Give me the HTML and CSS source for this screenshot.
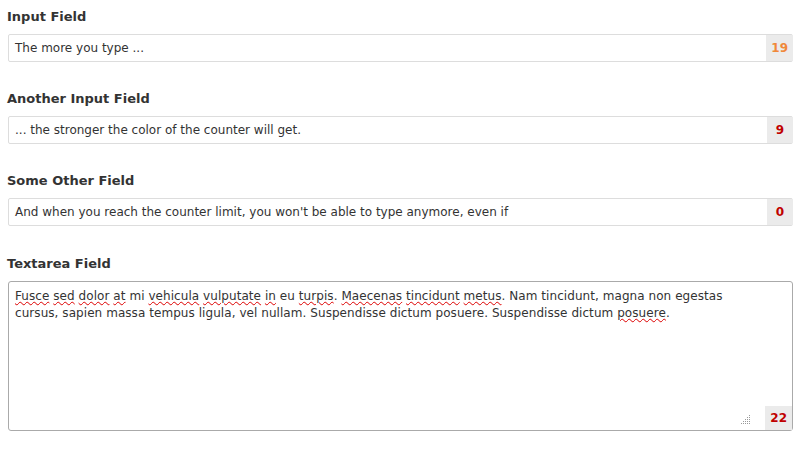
FILE: index.html
```html
<!DOCTYPE html>
<html>
<head>
<meta charset="utf-8">
<link rel="stylesheet" href="styles.css">
</head>
<body>
<div class="field">
  <label class="label">Input Field</label>
  <div class="wrap">
    <div class="input">The more you type ...</div>
    <span class="counter warn">19</span>
  </div>
</div>
<div class="field">
  <label class="label">Another Input Field</label>
  <div class="wrap">
    <div class="input">... the stronger the color of the counter will get.</div>
    <span class="counter danger">9</span>
  </div>
</div>
<div class="field">
  <label class="label">Some Other Field</label>
  <div class="wrap">
    <div class="input">And when you reach the counter limit, you won't be able to type anymore, even if</div>
    <span class="counter danger">0</span>
  </div>
</div>
<div class="field last">
  <label class="label">Textarea Field</label>
  <div class="wrap">
    <div class="textarea"><span class="sp">Fusce</span> <span class="sp">sed</span> <span class="sp">dolor</span> <span class="sp">at</span> mi <span class="sp">vehicula</span> <span class="sp">vulputate</span> <span class="sp">in</span> eu <span class="sp">turpis</span>. <span class="sp">Maecenas</span> <span class="sp">tincidunt</span> <span class="sp">metus</span>. Nam tincidunt, magna non egestas cursus, sapien massa tempus ligula, vel nullam. Suspendisse dictum posuere. Suspendisse dictum <span class="sp">posuere</span>.</div>
    <svg class="grip" width="10" height="10" viewBox="0 0 10 10">
      <g fill="#999">
        <rect x="8" y="0" width="1" height="1"/>
        <rect x="6" y="2" width="1" height="1"/><rect x="8" y="2" width="1" height="1"/>
        <rect x="4" y="4" width="1" height="1"/><rect x="6" y="4" width="1" height="1"/><rect x="8" y="4" width="1" height="1"/>
        <rect x="2" y="6" width="1" height="1"/><rect x="4" y="6" width="1" height="1"/><rect x="6" y="6" width="1" height="1"/><rect x="8" y="6" width="1" height="1"/>
        <rect x="0" y="8" width="1" height="1"/><rect x="2" y="8" width="1" height="1"/><rect x="4" y="8" width="1" height="1"/><rect x="6" y="8" width="1" height="1"/><rect x="8" y="8" width="1" height="1"/>
      </g>
    </svg>
    <span class="counter danger ta">22</span>
  </div>
</div>
</body>
</html>
```
FILE: styles.css
```css
html, body { margin: 0; padding: 0; background: #fff; }
body {
  padding: 8px 8px 0 8px;
  font-family: "DejaVu Sans", sans-serif;
  color: #333;
}
.field { margin-bottom: 28px; }
.field.last { margin-top: 29px; }
.field:nth-child(3) { margin-bottom: 0; }
.label {
  display: block;
  font-size: 13px;
  font-weight: bold;
  line-height: 18px;
  color: #333;
  margin-left: -1px;
  margin-bottom: 8px;
}
.wrap { position: relative; }
.input {
  box-sizing: border-box;
  height: 28px;
  border: 1px solid #ddd;
  border-radius: 2px;
  padding: 0 40px 0 6px;
  font-size: 12px;
  line-height: 26px;
  white-space: nowrap;
  overflow: hidden;
  width: 785px;
}
.counter {
  position: absolute;
  right: 1px;
  top: 1px;
  height: 26px;
  line-height: 26px;
  padding: 0 5px;
  min-width: 16px;
  text-align: center;
  background: #ebebeb;
  font-size: 12px;
  font-weight: bold;
}
.warn { color: #f0883a; }
.danger { color: #c00000; }
.textarea {
  box-sizing: border-box;
  width: 785px;
  height: 150px;
  border: 1px solid #aaa;
  border-radius: 3px;
  padding: 6px 40px 6px 6px;
  font-size: 12px;
  letter-spacing: 0.06px;
  line-height: 17px;
  color: #333;
}
.sp {
  text-decoration: underline wavy #d00;
  text-decoration-thickness: 1px;
  text-underline-offset: 1px;
}
.counter.ta {
  top: auto;
  bottom: 1px;
  right: 2px;
  height: 24px;
  line-height: 24px;
}
.grip {
  position: absolute;
  right: 43px;
  bottom: 6px;
}
```
